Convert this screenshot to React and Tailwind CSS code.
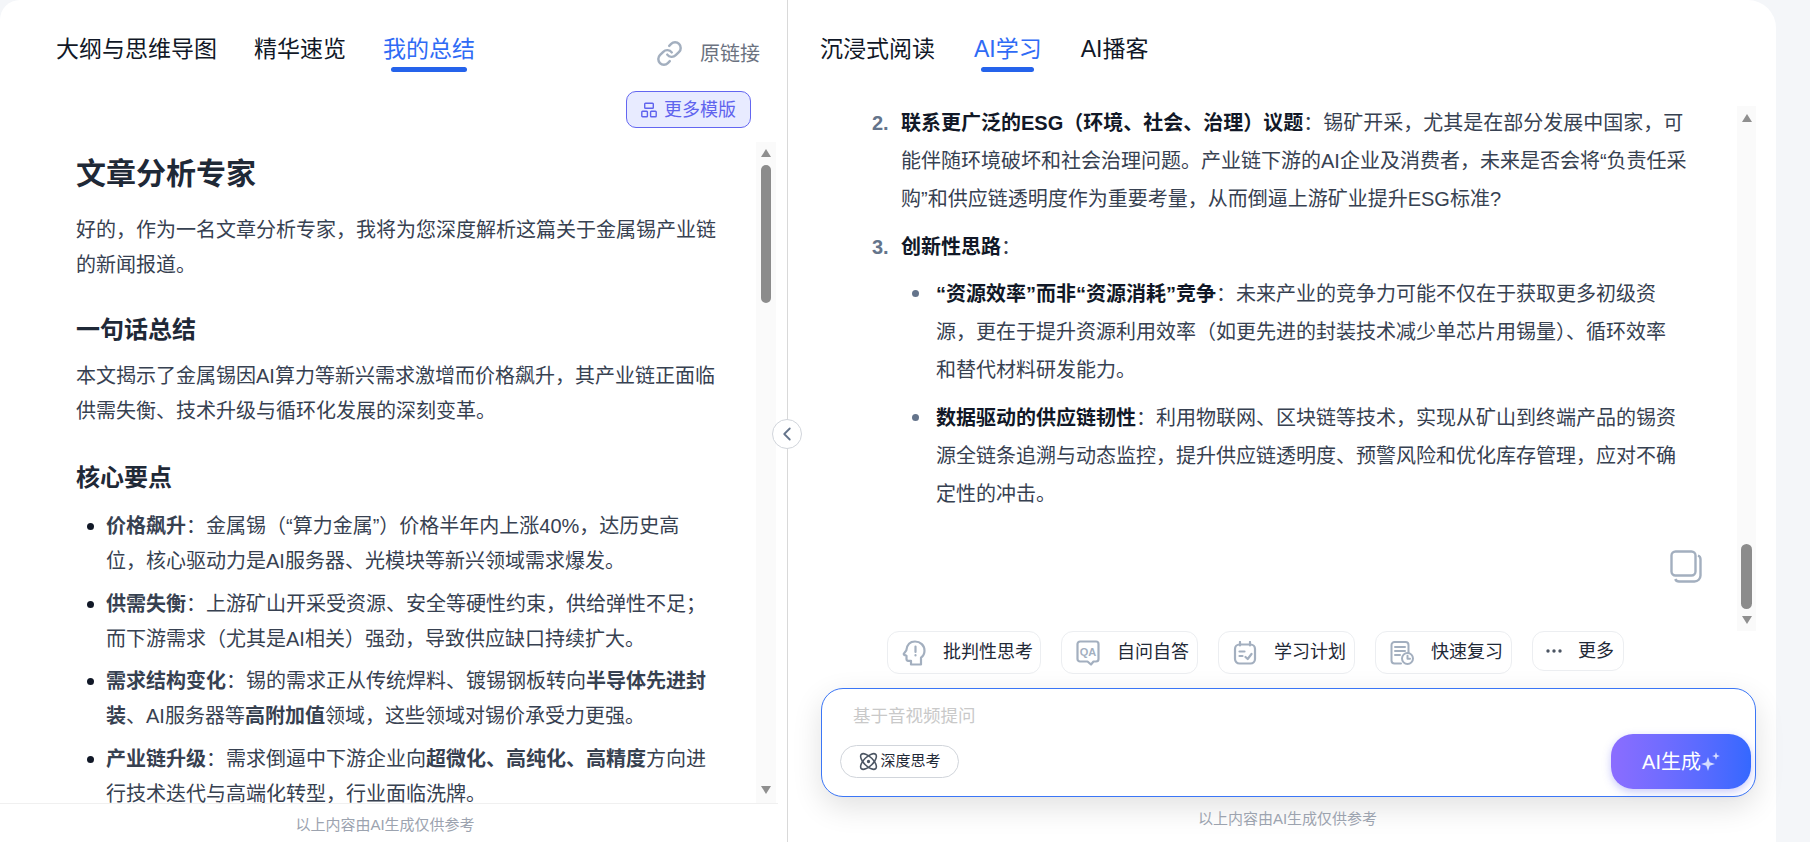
import { Link, Atom, ChevronLeft } from 'lucide-react';

const Tab = ({ label, active, bar }) => {
  return (
    <div className="flex flex-col items-center">
      <span className={`text-[23px] leading-[30px] whitespace-nowrap ${active ? 'text-[#2f6bf5]' : 'text-[#111827]'}`}>{label}</span>
      <span className={`mt-[3px] h-[5px] rounded-full ${bar} ${active ? 'bg-[#2563eb]' : 'bg-transparent'}`}></span>
    </div>
  );
};

const Arrow = ({ down }) => {
  return (
    <svg width="10" height="8" viewBox="0 0 10 8" className="shrink-0">
      <polygon points={down ? '0,0 10,0 5,8' : '0,8 10,8 5,0'} fill="#8f8f8f" />
    </svg>
  );
};

const Bullet = ({ className }) => <span className={`shrink-0 h-[7px] w-[7px] rounded-full ${className}`}></span>;

const LeftItem = ({ children }) => {
  return (
    <li className="flex mt-[7.5px] first:mt-0">
      <Bullet className="mt-[14px] ml-[11px] mr-[12px] bg-[#111827]" />
      <p>{children}</p>
    </li>
  );
};

const HeadIcon = () => (
  <svg width="24" height="26" viewBox="0 0 24 26" fill="none" stroke="#a3afbf" strokeWidth="2.2" strokeLinejoin="round" strokeLinecap="round">
    <path d="M13 1.5c5.4 0 9.5 4 9.5 9.2 0 3-1.3 5.3-3.5 7v6.8H9v-3.7H6.2c-1 0-1.7-.7-1.7-1.7v-3.4l-2.2-.8c-.6-.3-.7-.8-.4-1.3l2.4-3.3C5 4.6 8.5 1.5 13 1.5z" />
    <path d="M13.5 6.5V12M13.5 15.2v.3" />
  </svg>
);

const QaIcon = () => (
  <svg width="24" height="26" viewBox="0 0 24 26" fill="none" stroke="#a3afbf" strokeWidth="2.2" strokeLinejoin="round">
    <path d="M4 1.5h16a2.5 2.5 0 0 1 2.5 2.5v15a2.5 2.5 0 0 1-2.5 2.5h-2.5l-2.5 3-3.5-3H4A2.5 2.5 0 0 1 1.5 19V4A2.5 2.5 0 0 1 4 1.5z" />
    <text x="12" y="15.5" textAnchor="middle" fontSize="11" fontWeight="700" fill="#a3afbf" stroke="none" fontFamily="Liberation Sans">QA</text>
  </svg>
);

const PlanIcon = () => (
  <svg width="24" height="24" viewBox="0 0 24 24" fill="none" stroke="#a3afbf" strokeWidth="2.2" strokeLinecap="round" strokeLinejoin="round">
    <rect x="2" y="3.5" width="20" height="19" rx="4.5" />
    <path d="M7 1v3.5M17 1v3.5M6.5 10.5h5M6.5 15h3M12.5 16l2.2 2 3.8-5" />
  </svg>
);

const ReviewIcon = () => (
  <svg width="24" height="24" viewBox="0 0 24 24" fill="none" stroke="#a3afbf" strokeWidth="2" strokeLinecap="round" strokeLinejoin="round">
    <path d="M11 22.5H4.5a3 3 0 0 1-3-3V4a3 3 0 0 1 3-3h11a3 3 0 0 1 3 3v8" />
    <path d="M5 6h10M5 10h10M5 14h5" />
    <circle cx="17.5" cy="17.5" r="5.5" />
    <path d="M17.5 14.8v3h2.5" />
  </svg>
);

const Chip = ({ icon, label, width }) => {
  return (
    <div className={`flex items-center h-[43px] rounded-[12px] border border-[#eceef1] pl-[14px] ${width}`}>
      <span className="flex w-[24px] shrink-0 justify-center">{icon}</span>
      <span className="ml-[17px] text-[18px] text-[#1f2937] whitespace-nowrap">{label}</span>
    </div>
  );
};

export default function App() {
  return (
    <div className="flex h-[842px] w-[1810px] overflow-hidden bg-[#f4f6f9] font-['Liberation_Sans','Noto_Sans_CJK_SC',sans-serif]">
      <div className="relative flex h-full w-[1776px] rounded-tl-[20px] rounded-tr-[28px] bg-white">
        {/* left panel */}
        <div className="flex h-full w-[788px] shrink-0 flex-col border-r border-[#d9d9d9]">
          <div className="flex pl-[56px] pr-[27px] pt-[34px] h-[91px] shrink-0">
            <div className="flex gap-[37px]">
              <Tab label="大纲与思维导图" bar="w-[76px] invisible" />
              <Tab label="精华速览" bar="w-[76px] invisible" />
              <Tab label="我的总结" bar="w-[76px]" active />
            </div>
            <div className="ml-auto flex h-[38px] items-center pt-[2px] text-[20px] text-[#6b7280]">
              <Link size={27} strokeWidth={2.2} className="-mt-[2px] text-[#a3afbf]" />
              <span className="ml-[17px] whitespace-nowrap">原链接</span>
            </div>
          </div>
          <div className="flex shrink-0 justify-end pr-[36px]">
            <div className="flex h-[37px] w-[125px] items-center justify-center gap-[7px] rounded-[10px] border border-[#6366f1] bg-[#e8ebff] pt-[1px] text-[18px] text-[#5f63ee]">
              <svg width="16" height="16" viewBox="0 0 16 16" fill="none" stroke="#5f63ee" strokeWidth="1.4">
                <rect x="3.7" y="1.2" width="8.6" height="5" rx="0.8" />
                <rect x="0.8" y="9.3" width="5.6" height="5.5" rx="0.8" />
                <rect x="9.6" y="9.3" width="5.6" height="5.5" rx="0.8" />
              </svg>
              <span>更多模版</span>
            </div>
          </div>

          <div className="mt-[14px] flex h-[661px] shrink-0 pr-[11px]">
            <div className="min-w-0 flex-1 overflow-hidden pl-[76px] pr-[36px] pt-[12px] text-[20px] leading-[35px] text-[#374151]">
              <h1 className="text-[30px] leading-[40px] font-bold text-[#1f2937]">文章分析专家</h1>
              <p className="mt-[18.5px]">好的&#xFF0C;作为一名文章分析专家&#xFF0C;我将为您深度解析这篇关于金属锡产业链的新闻报道。</p>
              <h2 className="mt-[31.5px] text-[24px] leading-[32px] font-bold text-[#1f2937]">一句话总结</h2>
              <p className="mt-[12.5px]">本文揭示了金属锡因AI算力等新兴需求激增而价格飙升&#xFF0C;其产业链正面临供需失衡、技术升级与循环化发展的深刻变革。</p>
              <h2 className="mt-[33px] text-[24px] leading-[32px] font-bold text-[#1f2937]">核心要点</h2>
              <ul className="mt-[15.5px] pr-[4px]">
                <LeftItem><b>价格飙升</b>&#xFF1A;金属锡&#xFF08;“算力金属”&#xFF09;价格半年内上涨40%&#xFF0C;达历史高位&#xFF0C;核心驱动力是AI服务器、光模块等新兴领域需求爆发。</LeftItem>
                <LeftItem><b>供需失衡</b>&#xFF1A;上游矿山开采受资源、安全等硬性约束&#xFF0C;供给弹性不足&#xFF1B;而下游需求&#xFF08;尤其是AI相关&#xFF09;强劲&#xFF0C;导致供应缺口持续扩大。</LeftItem>
                <LeftItem><b>需求结构变化</b>&#xFF1A;锡的需求正从传统焊料、镀锡钢板转向<b>半导体先进封装</b>、AI服务器等<b>高附加值</b>领域&#xFF0C;这些领域对锡价承受力更强。</LeftItem>
                <LeftItem><b>产业链升级</b>&#xFF1A;需求倒逼中下游企业向<b>超微化、高纯化、高精度</b>方向进行技术迭代与高端化转型&#xFF0C;行业面临洗牌。</LeftItem>
              </ul>
            </div>
            <div className="flex w-[20px] shrink-0 flex-col items-center bg-[#fafafa]">
              <div className="mt-[7px]"><Arrow /></div>
              <div className="mt-[8px] h-[138px] w-[10px] rounded-full bg-[#8c8c8c]"></div>
              <div className="mt-auto mb-[9px]"><Arrow down /></div>
            </div>
          </div>

          <div className="mr-[9px] flex flex-1 items-center justify-center border-t border-[#f0f0f0] pt-[5px] pr-[8px] text-[15px] text-[#9ca3af]">
            以上内容由AI生成仅供参考
          </div>
        </div>

        {/* right panel */}
        <div className="flex h-full min-w-0 flex-1 flex-col">
          <div className="flex h-[106px] shrink-0 gap-[39px] pl-[32px] pt-[34px]">
            <Tab label="沉浸式阅读" bar="w-[53px] invisible" />
            <Tab label="AI学习" bar="w-[53px]" active />
            <Tab label="AI播客" bar="w-[53px] invisible" />
          </div>

          <div className="relative flex h-[525px] shrink-0 pr-[20px]">
            <div className="min-w-0 flex-1 overflow-hidden pl-[84px] pr-[44px] text-[20px] leading-[38px] text-[#374151]">
              <div className="-mt-[2px] flex">
                <b className="w-[29px] shrink-0 text-[#64748b]">2.</b>
                <p><b className="text-[#111827]">联系更广泛的ESG&#xFF08;环境、社会、治理&#xFF09;议题</b>&#xFF1A;锡矿开采&#xFF0C;尤其是在部分发展中国家&#xFF0C;可能伴随环境破坏和社会治理问题。产业链下游的AI企业及消费者&#xFF0C;未来是否会将“负责任采购”和供应链透明度作为重要考量&#xFF0C;从而倒逼上游矿业提升ESG标准?</p>
              </div>
              <div className="mt-[10px] flex">
                <b className="w-[29px] shrink-0 text-[#64748b]">3.</b>
                <p><b className="text-[#111827]">创新性思路</b>&#xFF1A;</p>
              </div>
              <div className="mt-[9px] flex pl-[40px] pr-[14px]">
                <Bullet className="mt-[15px] mr-[17px] bg-[#64748b]" />
                <p><b className="text-[#111827]">“资源效率”而非“资源消耗”竞争</b>&#xFF1A;未来产业的竞争力可能不仅在于获取更多初级资源&#xFF0C;更在于提升资源利用效率&#xFF08;如更先进的封装技术减少单芯片用锡量&#xFF09;、循环效率和替代材料研发能力。</p>
              </div>
              <div className="mt-[10px] flex pl-[40px] pr-[14px]">
                <Bullet className="mt-[15px] mr-[17px] bg-[#64748b]" />
                <p><b className="text-[#111827]">数据驱动的供应链韧性</b>&#xFF1A;利用物联网、区块链等技术&#xFF0C;实现从矿山到终端产品的锡资源全链条追溯与动态监控&#xFF0C;提升供应链透明度、预警风险和优化库存管理&#xFF0C;应对不确定性的冲击。</p>
              </div>
            </div>
            <div className="flex w-[19px] shrink-0 flex-col items-center bg-[#fafafa]">
              <div className="mt-[8px]"><Arrow /></div>
              <div className="mt-auto h-[65px] w-[11px] rounded-full bg-[#8c8c8c]"></div>
              <div className="mt-[7px] mb-[7px]"><Arrow down /></div>
            </div>
            {/* copy button sits over the scrolling text */}
            <svg width="32" height="33" viewBox="0 0 32 33" fill="none" stroke="#a3afbf" strokeWidth="2.4" className="absolute left-[882px] top-[444px]">
              <rect x="1.5" y="1.5" width="24" height="24" rx="4" />
              <path d="M28 5.5c1.5.6 2.5 2 2.5 3.7v16.3a6 6 0 0 1-6 6H9c-1.7 0-3.2-1-3.7-2.5" />
            </svg>
          </div>

          <div className="flex shrink-0 items-start gap-[20px] pl-[99px]">
            <Chip icon={<HeadIcon />} label="批判性思考" width="w-[154px]" />
            <Chip icon={<QaIcon />} label="自问自答" width="w-[137px]" />
            <Chip icon={<PlanIcon />} label="学习计划" width="w-[137px]" />
            <Chip icon={<ReviewIcon />} label="快速复习" width="w-[137px]" />
            <div className="flex h-[40px] w-[92px] items-center rounded-[12px] border border-[#eceef1] pl-[13px]">
              <svg width="16" height="4" viewBox="0 0 16 4" fill="#4b5563">
                <circle cx="2" cy="2" r="1.7" />
                <circle cx="8" cy="2" r="1.7" />
                <circle cx="14" cy="2" r="1.7" />
              </svg>
              <span className="ml-[16px] text-[18px] text-[#1f2937] whitespace-nowrap">更多</span>
            </div>
          </div>

          <div className="ml-[33px] mt-[14px] h-[109px] w-[935px] shrink-0 rounded-[22px] border border-[#3b76f6] bg-white shadow-[0_10px_30px_rgba(0,0,0,0.12)]">
            <div className="pl-[31px] pt-[14px] text-[17.5px] leading-[26px] text-[#c9c9c9]">基于音视频提问</div>
            <div className="mt-[5px] flex items-center justify-between pl-[18px] pr-[4px]">
              <div className="flex h-[33px] w-[119px] items-center justify-center gap-[1px] rounded-full border border-[#d1d5db] text-[15px] text-[#1f2937]">
                <Atom size={21} strokeWidth={1.8} className="text-[#4b5563]" />
                <span className="whitespace-nowrap">深度思考</span>
              </div>
              <div className="flex h-[55px] w-[140px] items-center justify-center rounded-[22px] bg-linear-to-r from-[#8b6dff] to-[#3468ff] text-[20px] text-white shadow-[0_3px_8px_rgba(99,102,241,0.35)]">
                <span className="whitespace-nowrap">AI生成</span>
                <svg width="19" height="22" viewBox="0 0 19 22" fill="#d5dcff">
                  <path d="M7 6l1.7 5.3L14 13l-5.300 1.700L7 20l-1.700-5.300L0 13l5.300-1.700z" />
                  <path d="M15 1l1 2.900 2.900 1-2.900 1L15 9l-1-3.100-2.900-1 2.900-1z" />
                </svg>
              </div>
            </div>
          </div>

          <div className="flex flex-1 items-center justify-center pl-[11px] text-[15px] text-[#9ca3af]">
            以上内容由AI生成仅供参考
          </div>
        </div>

        {/* collapse toggle on the divider */}
        <div className="absolute left-[772px] top-[419px] flex h-[30px] w-[30px] items-center justify-center rounded-full border border-[#d1d5db] bg-white">
          <ChevronLeft size={22} strokeWidth={2} className="text-[#64748b]" />
        </div>
      </div>
    </div>
  );
}
